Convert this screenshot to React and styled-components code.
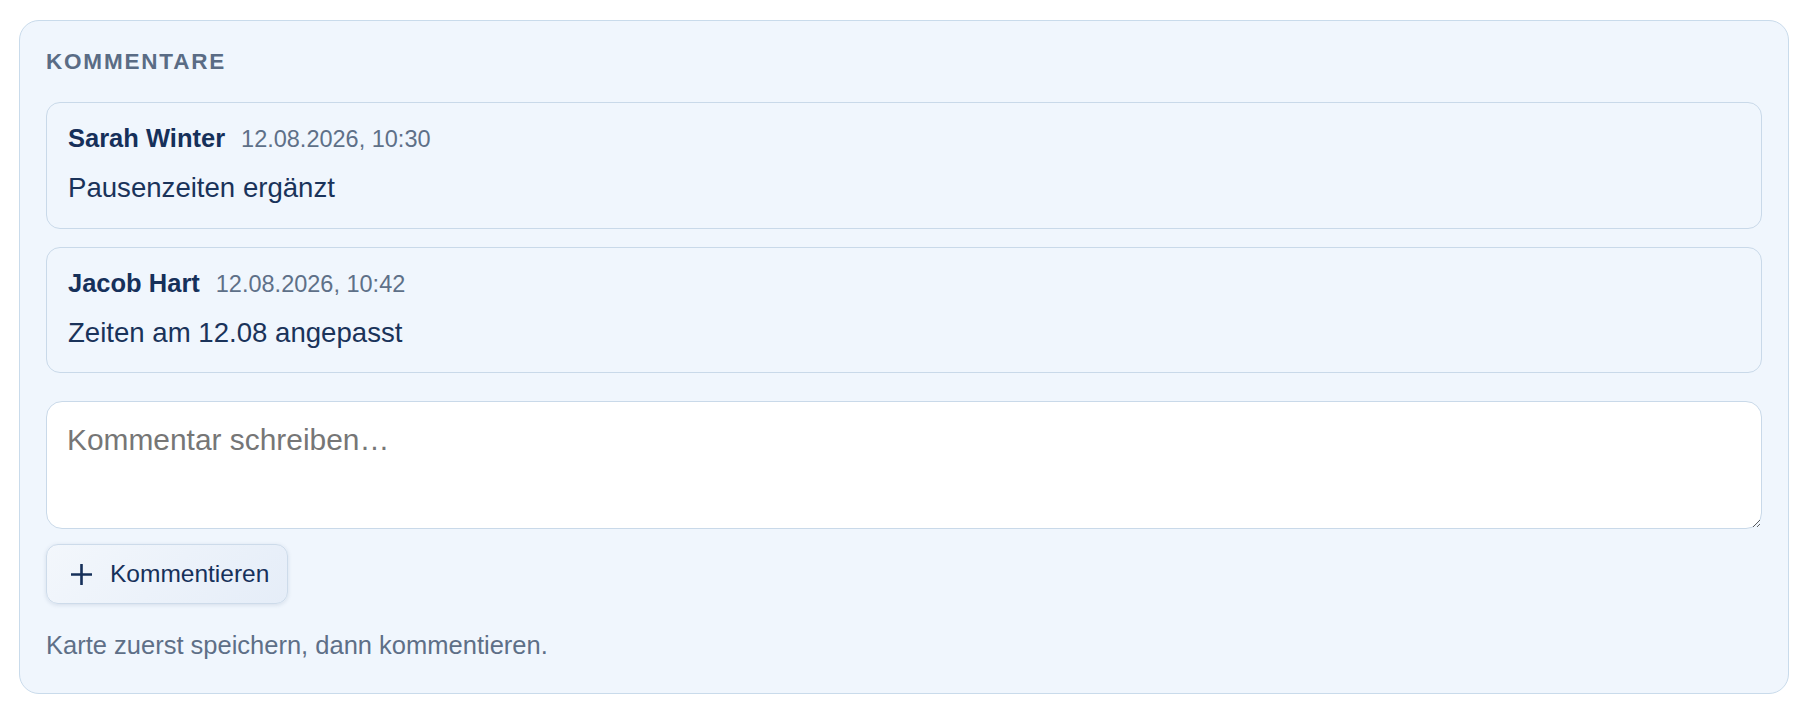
import styled, { createGlobalStyle } from "styled-components";

const comments = [
  { id: 1, author: "Sarah Winter", time: "12.08.2026, 10:30", text: "Pausenzeiten ergänzt" },
  { id: 2, author: "Jacob Hart", time: "12.08.2026, 10:42", text: "Zeiten am 12.08 angepasst" },
];

const GlobalStyle = createGlobalStyle`
  * {
    box-sizing: border-box;
  }

  body {
    margin: 0;
    background: #ffffff;
    font-family: "Liberation Sans", Arial, sans-serif;
  }
`;

const Page = styled.div`
  padding: 20px 12px 10px 19px;
`;

const Panel = styled.section`
  display: flex;
  flex-direction: column;
  padding: 28px 26px 33px;
  background: #f0f6fd;
  border: 1px solid #c9dbeb;
  border-radius: 20px;
`;

const Title = styled.h2`
  margin: 0 0 27px;
  font-size: 22.5px;
  line-height: 26px;
  font-weight: 700;
  letter-spacing: 0.08em;
  text-transform: uppercase;
  color: #5a6c85;
`;

const CommentList = styled.div`
  display: flex;
  flex-direction: column;
  gap: 18px;
`;

const CommentCard = styled.article`
  padding: 21px 21px 20px;
  background: #f0f6fd;
  border: 1px solid #c9d9e9;
  border-radius: 14px;
`;

const CommentHead = styled.div`
  display: flex;
  align-items: baseline;
  gap: 16px;
`;

const Author = styled.span`
  font-size: 25.5px;
  font-weight: 700;
  color: #16305a;
`;

const Time = styled.time`
  font-size: 23.5px;
  color: #5e7088;
`;

const CommentText = styled.p`
  margin: 16px 0 0;
  font-size: 27.6px;
  line-height: 1.4;
  color: #1a335a;
`;

const Textarea = styled.textarea`
  display: block;
  width: 100%;
  height: 128px;
  margin-top: 28px;
  padding: 21px 20px;
  font-family: "Liberation Sans", Arial, sans-serif;
  font-size: 29.9px;
  color: #1a335a;
  background: #ffffff;
  border: 1px solid #c9d9e9;
  border-radius: 16px;
  outline: none;

  &::placeholder {
    color: #767676;
  }
`;

const Button = styled.button`
  align-self: flex-start;
  display: flex;
  align-items: center;
  gap: 18px;
  height: 60px;
  margin-top: 15px;
  padding: 0 18px 0 24px;
  font-family: "Liberation Sans", Arial, sans-serif;
  font-size: 24.5px;
  color: #16305a;
  background: linear-gradient(135deg, #f3f7fc 0%, #e5edf8 100%);
  border: 1px solid #cddbea;
  border-radius: 12px;
  box-shadow: 0 1px 4px rgba(40, 70, 110, 0.14);
  cursor: pointer;

  svg {
    flex: none;
  }
`;

const Helper = styled.p`
  margin: 27px 0 0;
  font-size: 25.5px;
  color: #5e6f87;
`;

function PlusIcon() {
  return (
    <svg width="21" height="21" viewBox="0 0 21 21" fill="none">
      <path d="M10.5 0.5v20M0.5 10.5h20" stroke="#16305a" strokeWidth="2.6" strokeLinecap="round" />
    </svg>
  );
}

export default function App() {
  return (
    <Page>
      <GlobalStyle />
      <Panel>
        <Title>Kommentare</Title>
        <CommentList>
          {comments.map((c) => (
            <CommentCard key={c.id}>
              <CommentHead>
                <Author>{c.author}</Author>
                <Time>{c.time}</Time>
              </CommentHead>
              <CommentText>{c.text}</CommentText>
            </CommentCard>
          ))}
        </CommentList>
        <Textarea placeholder="Kommentar schreiben…" />
        <Button type="button">
          <PlusIcon />
          Kommentieren
        </Button>
        <Helper>Karte zuerst speichern, dann kommentieren.</Helper>
      </Panel>
    </Page>
  );
}
